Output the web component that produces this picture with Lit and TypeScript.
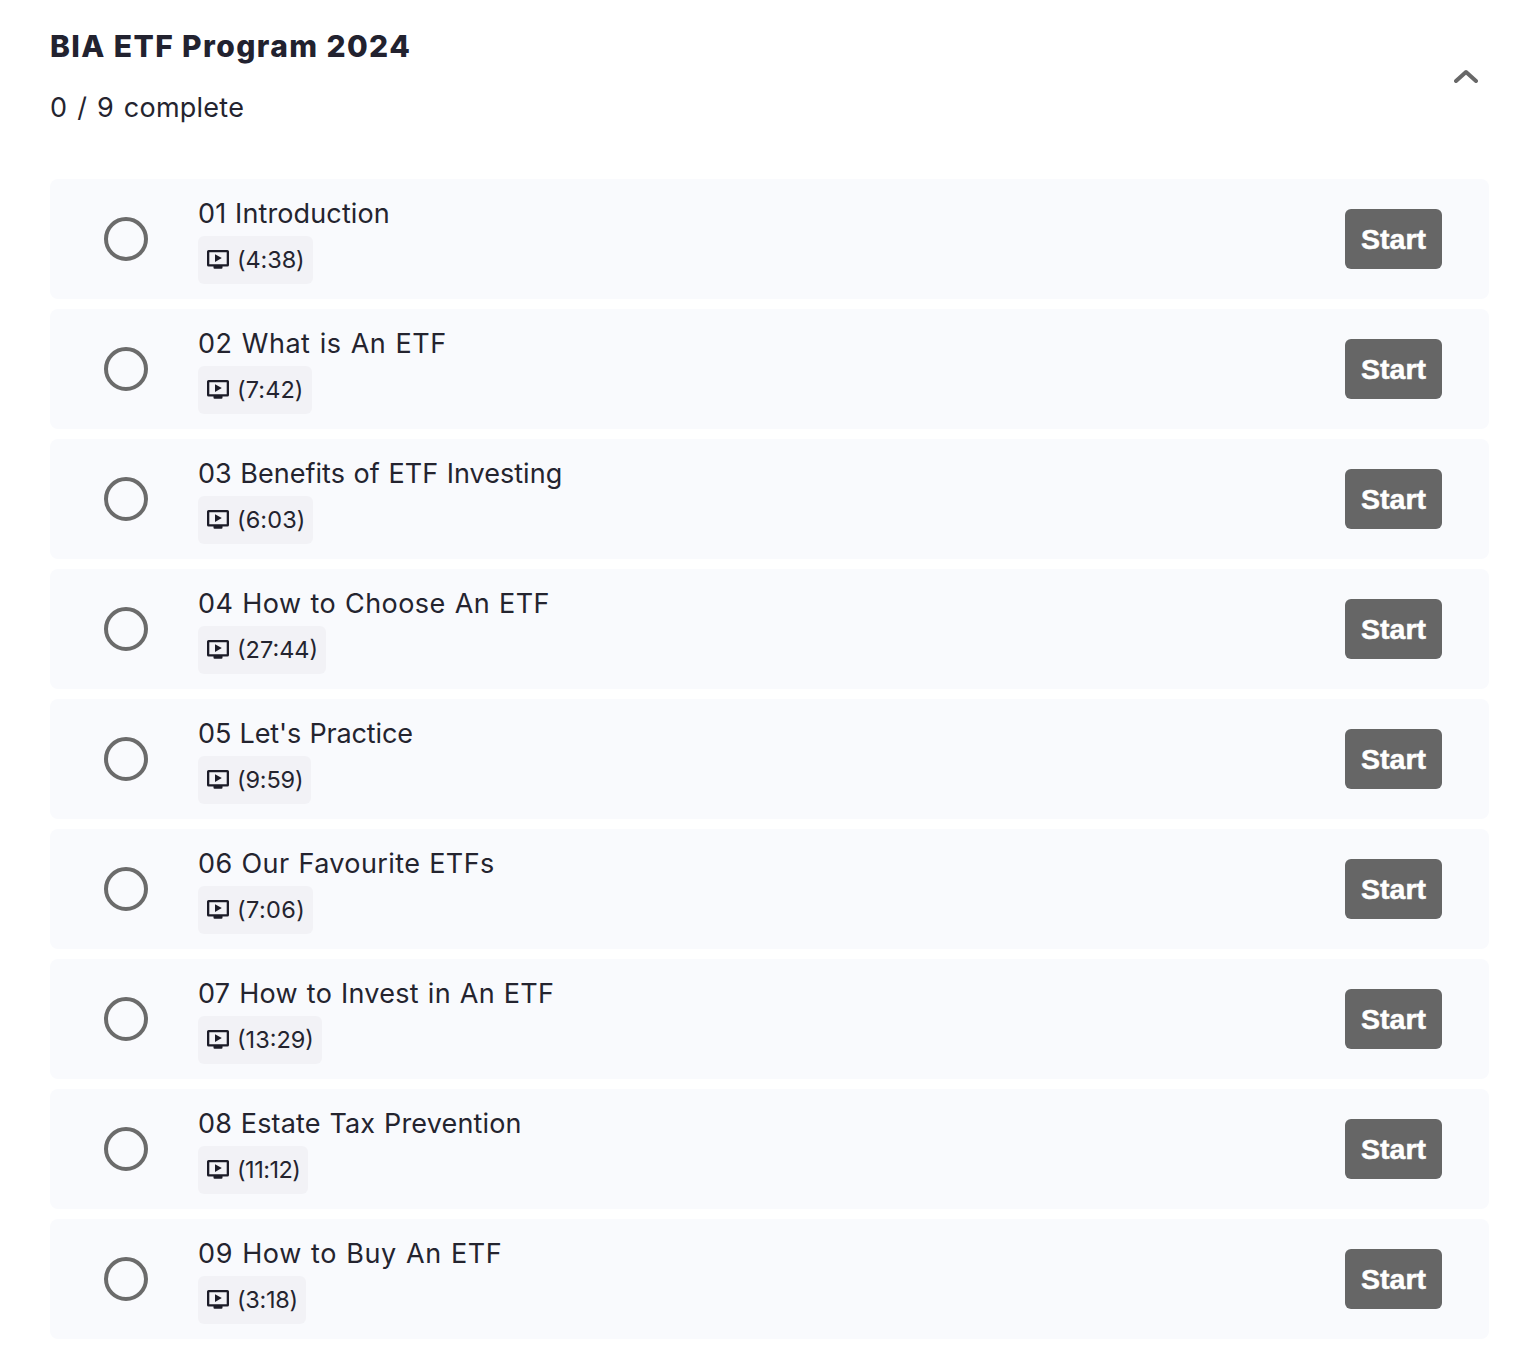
import { LitElement, html, css, svg } from "lit";
import { customElement } from "lit/decorators.js";

/* title, duration, title tracking (px), duration tracking (px) */
const LESSONS: [string, string, number, number][] = [
  ["01 Introduction", "(4:38)", 0.13, -0.1],
  ["02 What is An ETF", "(7:42)", 0.55, 0.1],
  ["03 Benefits of ETF Investing", "(6:03)", 0.02, 0.1],
  ["04 How to Choose An ETF", "(27:44)", 0.42, 0],
  ["05 Let's Practice", "(9:59)", -0.15, -0.15],
  ["06 Our Favourite ETFs", "(7:06)", 0.39, 0.4],
  ["07 How to Invest in An ETF", "(13:29)", 0.28, 0],
  ["08 Estate Tax Prevention", "(11:12)", 0.16, -0.5],
  ["09 How to Buy An ETF", "(3:18)", 0.6, -0.3],
];

const tv = svg`<path fill-rule="evenodd" d="M2.6 1h18.8A1.6 1.6 0 0 1 23 2.6v13.3a1.6 1.6 0 0 1-1.6 1.6H16.500v1.300a1 1 0 0 1-1 1h-7a1 1 0 0 1-1-1v-1.300H2.600A1.600 1.600 0 0 1 1 15.900V2.600A1.600 1.600 0 0 1 2.600 1zM3.300 3.300v11.900h17.400V3.300z"/><path d="M9 5.200v7.700l6.800-3.900z"/>`;

@customElement("app-root")
export class AppRoot extends LitElement {
  static styles = css`
    :host {
      display: block;
      background: #fff;
      font-family: "Inter", "Liberation Sans", sans-serif;
      color: #24242f;
      min-height: 1364px;
    }
    .wrap { padding: 0 49px 24px 50px; }
    .head {
      display: flex;
      justify-content: space-between;
      align-items: center;
      padding-top: 28px;
      margin-bottom: 53px;
    }
    h1 { margin: 0; font-size: 30px; line-height: 36px; font-weight: 800; color: #22222f; letter-spacing: 1.4px; }
    .count { margin-top: 26px; font-size: 27px; line-height: 36px; font-weight: 400; letter-spacing: 0.25px; word-spacing: 2px; }
    .chev { width: 24px; height: 14px; margin: 0 11px 2px 0; display: block; }
    .list { display: flex; flex-direction: column; gap: 10px; }
    .row {
      height: 120px;
      box-sizing: border-box;
      background: #f9fafd;
      border-radius: 8px;
      display: flex;
      align-items: center;
      padding: 0 47px 0 54px;
    }
    .ring {
      width: 44px; height: 44px;
      box-sizing: border-box;
      border: 4px solid #6b6b6b;
      border-radius: 50%;
      flex: none;
      margin-right: 50px;
    }
    .info { flex: 1; display: flex; flex-direction: column; align-items: flex-start; gap: 4px; padding-top: 2px; }
    .title { font-size: 27px; line-height: 36px; word-spacing: 1px; }
    .tag {
      display: flex;
      align-items: center;
      gap: 7px;
      height: 48px;
      box-sizing: border-box;
      padding: 0 8px 2px;
      background: #f2f2f6;
      border-radius: 6px;
      font-size: 23.5px;
    }
    .tag svg { width: 24px; height: 21px; display: block; fill: #1c1c28; }
    .start {
      width: 97px; height: 60px;
      border: 0;
      padding: 0;
      border-radius: 6px;
      background: #666666;
      color: #fff;
      font: 700 28.5px "Liberation Sans", Arial, sans-serif;
      -webkit-text-stroke: 0.5px #fff;
    }
  `;

  render() {
    return html`<div class="wrap">
      <div class="head">
        <div>
          <h1>BIA ETF Program 2024</h1>
          <div class="count">0 / 9 complete</div>
        </div>
        <svg class="chev" viewBox="0 0 24 14" fill="none" stroke="#686868" stroke-width="4" stroke-linecap="round" stroke-linejoin="round"><path d="M2 12 12 3l10 9"/></svg>
      </div>
      <div class="list">
        ${LESSONS.map(([t, d, lt, ld]) => html`<div class="row">
          <div class="ring"></div>
          <div class="info">
            <div class="title" style="letter-spacing:${lt}px">${t}</div>
            <div class="tag"><svg viewBox="0 0 24 21">${tv}</svg><span style="letter-spacing:${ld}px">${d}</span></div>
          </div>
          <button class="start">Start</button>
        </div>`)}
      </div>
    </div>`;
  }
}
